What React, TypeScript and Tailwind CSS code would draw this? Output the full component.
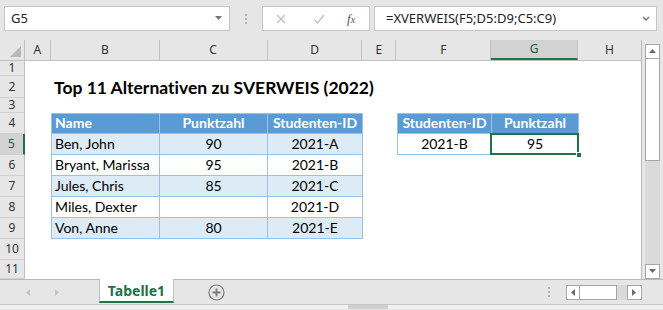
import React from 'react';

const UI = { fontFamily: '"Noto Sans", "Open Sans", sans-serif' };
const CELL = { fontFamily: 'Lato, "Open Sans", sans-serif', fontVariantLigatures: 'none' as const };

// column widths A..H
const W = ['w-[26px]', 'w-[109px]', 'w-[108px]', 'w-[95px]', 'w-[34px]', 'w-[95px]', 'w-[87px]', 'w-[63px]'];
const LETTERS = ['A', 'B', 'C', 'D', 'E', 'F', 'G', 'H'];

type Cell = { text?: string; cls?: string; sel?: boolean };

const blue = 'bg-[#ddebf7]';
const head = 'bg-[#5b9bd5] text-white font-bold';
const bd = 'border-b border-r border-[#9bc2e6]';

const rows: { n: number; h: string; cells: Cell[] }[] = [
  { n: 1, h: 'h-[15px]', cells: [] },
  {
    n: 2,
    h: 'h-[22px]',
    cells: [{}, { text: 'Top 11 Alternativen zu SVERWEIS (2022)', cls: 'z-10 font-bold text-[17.5px] whitespace-nowrap overflow-visible' }],
  },
  { n: 3, h: 'h-[15px]', cells: [] },
  {
    n: 4,
    h: 'h-[21px]',
    cells: [
      {},
      { text: 'Name', cls: `${head} ${bd} border-t border-l` },
      { text: 'Punktzahl', cls: `${head} ${bd} border-t justify-center` },
      { text: 'Studenten-ID', cls: `${head} ${bd} border-t justify-center` },
      {},
      { text: 'Studenten-ID', cls: `${head} ${bd} border-t border-l justify-center` },
      { text: 'Punktzahl', cls: `${head} ${bd} border-t justify-center` },
    ],
  },
  {
    n: 5,
    h: 'h-[21px]',
    cells: [
      {},
      { text: 'Ben, John', cls: `${blue} ${bd} border-l` },
      { text: '90', cls: `${blue} ${bd} justify-center` },
      { text: '2021-A', cls: `${blue} ${bd} justify-center` },
      {},
      { text: '2021-B', cls: `${bd} border-l justify-center` },
      { text: '95', cls: `${bd} justify-center`, sel: true },
    ],
  },
  {
    n: 6,
    h: 'h-[21px]',
    cells: [
      {},
      { text: 'Bryant, Marissa', cls: `${bd} border-l` },
      { text: '95', cls: `${bd} justify-center` },
      { text: '2021-B', cls: `${bd} justify-center` },
    ],
  },
  {
    n: 7,
    h: 'h-[21px]',
    cells: [
      {},
      { text: 'Jules, Chris', cls: `${blue} ${bd} border-l` },
      { text: '85', cls: `${blue} ${bd} justify-center` },
      { text: '2021-C', cls: `${blue} ${bd} justify-center` },
    ],
  },
  {
    n: 8,
    h: 'h-[21px]',
    cells: [
      {},
      { text: 'Miles, Dexter', cls: `${bd} border-l` },
      { text: '', cls: `${bd} justify-center` },
      { text: '2021-D', cls: `${bd} justify-center` },
    ],
  },
  {
    n: 9,
    h: 'h-[21px]',
    cells: [
      {},
      { text: 'Von, Anne', cls: `${blue} ${bd} border-l` },
      { text: '80', cls: `${blue} ${bd} justify-center` },
      { text: '2021-E', cls: `${blue} ${bd} justify-center` },
    ],
  },
  { n: 10, h: 'h-[21px]', cells: [] },
  { n: 11, h: 'h-[19px]', cells: [] },
];

const Tri = ({ dir, color = '#6b6b6b' }: { dir: 'up' | 'down' | 'left' | 'right'; color?: string }) => {
  const pts = {
    up: '1,6 4.5,2 8,6',
    down: '1,2 4.5,6 8,2',
    left: '6,1 2,4.5 6,8',
    right: '2,1 6,4.5 2,8',
  }[dir];
  return (
    <svg width="9" height="9" viewBox="0 0 9 9">
      <polygon points={pts} fill={color} />
    </svg>
  );
};

const FormulaBar = () => (
  <div className="flex h-[40px] items-start pt-[6px] pl-[4px] bg-[#e6e6e6]" style={UI}>
    <div className="flex h-[25px] w-[226px] items-center justify-between border border-[#c6c6c6] bg-white pl-[6px] pr-[6px] text-[13px] text-[#222]">
      <span>G5</span>
      <Tri dir="down" color="#777" />
    </div>
    <div className="flex h-[25px] w-[32px] flex-col items-center justify-center gap-[2px]">
      <span className="h-[2px] w-[2px] bg-[#b0b0b0]" />
      <span className="h-[2px] w-[2px] bg-[#b0b0b0]" />
      <span className="h-[2px] w-[2px] bg-[#b0b0b0]" />
    </div>
    <div className="flex h-[25px] w-[108px] items-center border border-[#c6c6c6] bg-white">
      <svg className="ml-[13px]" width="10" height="10" viewBox="0 0 10 10">
        <path d="M1 1 L9 9 M9 1 L1 9" stroke="#c0c0c0" strokeWidth="1.2" />
      </svg>
      <svg className="ml-[27px]" width="12" height="10" viewBox="0 0 12 10">
        <path d="M1 5.5 L4.5 9 L11 1" stroke="#c0c0c0" strokeWidth="1.4" fill="none" />
      </svg>
      <span className="ml-[22px] text-[13px] italic text-[#555]" style={{ fontFamily: '"Liberation Serif", serif' }}>
        f<span className="text-[10px]">x</span>
      </span>
    </div>
    <div className="ml-[4px] flex h-[25px] w-[283px] items-center justify-between border border-[#c6c6c6] bg-white pl-[11px] pr-[6px] text-[13px] text-[#222]">
      <span>=XVERWEIS(F5;D5:D9;C5:C9)</span>
      <svg width="8" height="6" viewBox="0 0 8 6">
        <path d="M1 1 L4 4 L7 1" stroke="#777" strokeWidth="1.5" fill="none" />
      </svg>
    </div>
  </div>
);

const ColumnHeader = () => (
  <div className="flex h-[21px] bg-[#e6e6e6] border-b border-[#c0c0c0]" style={UI}>
    <div className="relative w-[25px] border-r border-[#c0c0c0]">
      <svg className="absolute bottom-[3px] right-[3px]" width="11" height="11" viewBox="0 0 11 11">
        <polygon points="11,0 11,11 0,11" fill="#b8b8b8" />
      </svg>
    </div>
    {LETTERS.map((l, i) => (
      <div
        key={l}
        className={`${W[i]} flex items-center justify-center text-[12px] ${
          l === 'G'
            ? 'bg-[#d2d2d2] text-[#1e5b3a] border-b-2 border-[#217346] border-r border-r-[#c0c0c0]'
            : 'text-[#333] border-r border-[#c0c0c0]'
        } ${l === 'H' ? 'border-r-0' : ''}`}
      >
        {l}
      </div>
    ))}
  </div>
);

const Sheet = () => (
  <div className="w-[642px] border-r border-[#b8b8b8] bg-white">
    <ColumnHeader />
    {rows.map((r) => (
      <div key={r.n} className={`flex ${r.h}`}>
        <div
          className={`flex w-[25px] shrink-0 items-center justify-center border-b border-[#d0d0d0] text-[12px] ${
            r.n === 5
              ? 'bg-[#d2d2d2] text-[#1e5b3a] border-r-2 border-r-[#217346]'
              : 'bg-[#e6e6e6] text-[#333] border-r border-r-[#c0c0c0]'
          }`}
          style={UI}
        >
          {r.n}
        </div>
        {W.map((w, i) => {
          const c = r.cells[i] || {};
          return (
            <div
              key={i}
              className={`relative flex shrink-0 items-end px-[3px] pb-[1px] text-[14px] leading-[18px] text-black ${w} ${c.cls || ''}`}
              style={CELL}
            >
              {c.text}
              {c.sel && (
                <>
                  <div className="absolute left-[-2px] top-[-1px] right-[-1px] bottom-[-1px] border-2 border-[#217346]" />
                  <div className="absolute right-[-4px] bottom-[-4px] h-[6px] w-[6px] bg-[#217346] border border-white" />
                </>
              )}
            </div>
          );
        })}
      </div>
    ))}
  </div>
);

const VScroll = () => (
  <div className="flex w-[21px] flex-col bg-[#e6e6e6] pl-[3px] pr-[3px] pt-[4px]">
    <div className="flex h-[15px] items-center justify-center border border-[#a6a6a6] bg-white">
      <Tri dir="up" />
    </div>
    <div className="h-[102px] border border-t-0 border-[#a6a6a6] bg-white" />
    <div className="flex-1 bg-[#dadada]" />
    <div className="flex h-[15px] items-center justify-center border border-[#a6a6a6] bg-white">
      <Tri dir="down" />
    </div>
  </div>
);

const TabBar = () => (
  <div className="flex h-[25px] bg-[#e6e6e6] border-t border-[#b8b8b8]" style={UI}>
    <div className="flex w-[99px] items-center">
      <div className="ml-[24px]">
        <Tri dir="left" color="#c4c4c4" />
      </div>
      <div className="ml-[20px]">
        <Tri dir="right" color="#c4c4c4" />
      </div>
    </div>
    <div className="flex h-[24px] w-[75px] items-center justify-center border-x border-[#c0c0c0] border-b-2 border-b-[#217346] bg-white text-[14px] font-bold text-[#217346] -mt-px">
      Tabelle1
    </div>
    <div className="flex w-[84px] items-center justify-center">
      <svg width="17" height="17" viewBox="0 0 17 17">
        <circle cx="8.5" cy="8.5" r="7.5" stroke="#7a7a7a" strokeWidth="1.2" fill="none" />
        <path d="M8.5 4.5 V12.5 M4.5 8.5 H12.5" stroke="#7a7a7a" strokeWidth="1.8" />
      </svg>
    </div>
    <div className="flex flex-1 items-center justify-end pr-[21px]">
      <div className="mr-[16px] flex flex-col gap-[2px]">
        <span className="h-[2px] w-[2px] bg-[#b0b0b0]" />
        <span className="h-[2px] w-[2px] bg-[#b0b0b0]" />
        <span className="h-[2px] w-[2px] bg-[#b0b0b0]" />
      </div>
      <div className="flex h-[15px] items-stretch">
        <div className="flex w-[14px] items-center justify-center border border-[#a6a6a6] bg-white">
          <Tri dir="left" />
        </div>
        <div className="w-[37px] border border-l-0 border-[#a6a6a6] bg-white" />
        <div className="w-[10px] bg-[#dadada]" />
        <div className="flex w-[15px] items-center justify-center border border-[#a6a6a6] bg-white">
          <Tri dir="right" />
        </div>
      </div>
    </div>
  </div>
);

export default function App() {
  return (
    <div className="h-[310px] w-[663px] overflow-hidden bg-[#e6e6e6]">
      <FormulaBar />
      <div className="flex">
        <Sheet />
        <VScroll />
      </div>
      <TabBar />
      <div className="flex h-[5px] border-t border-[#c6c6c6] bg-[#f0f0f0]">
        <div className="ml-[348px] w-[40px] bg-[#d0d0d0]" />
      </div>
    </div>
  );
}
